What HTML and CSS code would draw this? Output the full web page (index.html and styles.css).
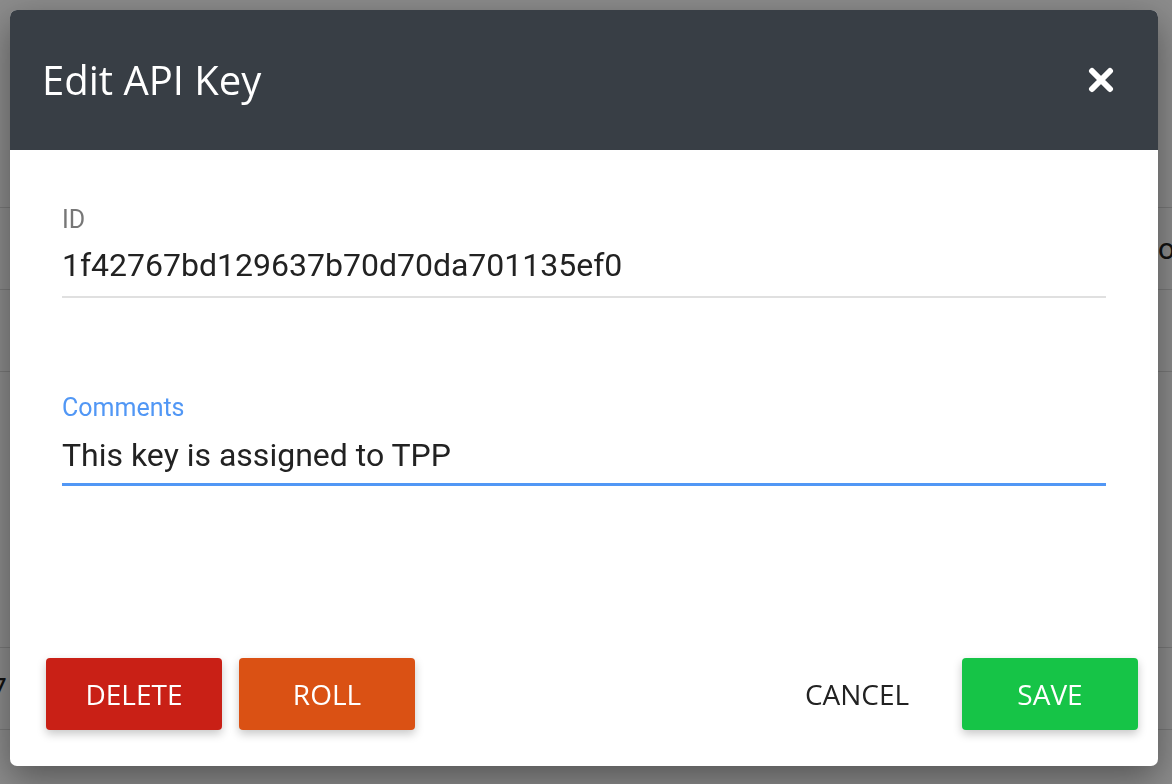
FILE: index.html
```html
<!DOCTYPE html>
<html lang="en">
<head>
    <meta charset="UTF-8">
    <meta name="viewport" content="width=device-width, initial-scale=1.0">
    <title>Edit API Key</title>
    <link rel="stylesheet" href="styles.css">
</head>
<body>
    <div class="page">
        <div class="row row-head"></div>
        <div class="row"><span class="cell-left"></span><span class="cell-right">o</span></div>
        <div class="row"></div>
        <div class="row row-tall"></div>
        <div class="row"><span class="cell-left">7</span></div>
        <div class="row"></div>
    </div>
    <div class="overlay"></div>

    <div class="modal">
        <div class="modal-header">
            <h2>Edit API Key</h2>
            <button class="close" title="Close">
                <svg width="26" height="26" viewBox="0 0 26 26">
                    <path d="M4 4 L22 22 M22 4 L4 22" stroke="#fff" stroke-width="6" stroke-linecap="round" fill="none"/>
                </svg>
            </button>
        </div>
        <div class="modal-body">
            <div class="field">
                <label for="keyId">ID</label>
                <input type="text" id="keyId" value="1f42767bd129637b70d70da701135ef0" readonly>
            </div>
            <div class="field focused">
                <label for="comments">Comments</label>
                <input type="text" id="comments" value="This key is assigned to TPP">
            </div>
        </div>
        <div class="modal-footer">
            <button class="btn btn-delete">DELETE</button>
            <button class="btn btn-roll">ROLL</button>
            <span class="spacer"></span>
            <button class="btn btn-cancel">CANCEL</button>
            <button class="btn btn-save">SAVE</button>
        </div>
    </div>
</body>
</html>
```

FILE: styles.css
```css
body {
    margin: 0;
    height: 784px;
    overflow: hidden;
    font-family: Roboto, "Liberation Sans", sans-serif;
    background-color: #fff;
}
.page {
    padding-top: 126px;
}
.row {
    height: 81px;
    border-top: 1px solid #ddd;
    display: flex;
    align-items: center;
    justify-content: space-between;
    font-size: 30px;
    color: #222;
}
.row-head {
    border-top: none;
}
.row-tall {
    height: 275px;
}
.cell-left {
    margin-left: -10px;
}
.cell-right {
    margin-right: -3px;
}
.overlay {
    position: fixed;
    inset: 0;
    background-color: rgba(0, 0, 0, 0.45);
}
.modal {
    position: absolute;
    left: 10px;
    top: 10px;
    width: 1148px;
    height: 756px;
    background-color: #fff;
    border-radius: 7px;
    overflow: hidden;
    display: flex;
    flex-direction: column;
    box-shadow: 0 12px 36px rgba(0, 0, 0, 0.4);
}
.modal-header {
    height: 140px;
    flex-shrink: 0;
    background-color: #383e45;
    display: flex;
    align-items: center;
    justify-content: space-between;
    padding: 0 44px 0 32px;
}
.modal-header h2 {
    margin: 0;
    font-family: "Open Sans", sans-serif;
    font-weight: 400;
    font-size: 40px;
    color: #fff;
    position: relative;
    top: -1px;
}
.close {
    background: none;
    border: none;
    padding: 0;
    width: 26px;
    height: 26px;
    cursor: pointer;
    display: block;
}
.close svg {
    display: block;
}
.modal-body {
    flex: 1;
    padding: 56px 52px 0 52px;
}
.field {
    margin-bottom: 96px;
}
.field label {
    display: block;
    font-size: 25px;
    line-height: 28px;
    color: #777;
}
.field input {
    display: block;
    width: 100%;
    height: 52px;
    box-sizing: border-box;
    border: none;
    border-bottom: 2px solid #e0e0e0;
    margin-top: 12px;
    padding: 0 0 12px 0;
    font-family: Roboto, sans-serif;
    font-size: 32px;
    line-height: 38px;
    color: #222;
    outline: none;
    background: transparent;
}
.field.focused label {
    color: #5197f5;
}
.field.focused input {
    margin-top: 14px;
    height: 50px;
    border-bottom: 3px solid #5197f5;
    padding-bottom: 9px;
}
.modal-footer {
    display: flex;
    gap: 17px;
    padding: 0 20px 36px 36px;
}
.spacer {
    flex: 1;
}
.btn {
    width: 176px;
    height: 72px;
    border: none;
    border-radius: 4px;
    font-family: "Open Sans", sans-serif;
    font-size: 28px;
    color: #fff;
    cursor: pointer;
    box-shadow: 0 4px 10px rgba(0, 0, 0, 0.22);
}
.btn-delete {
    background-color: #c92016;
}
.btn-roll {
    background-color: #da5114;
}
.btn-cancel {
    background: none;
    color: #222;
    box-shadow: none;
}
.btn-save {
    background-color: #16c447;
}
```
